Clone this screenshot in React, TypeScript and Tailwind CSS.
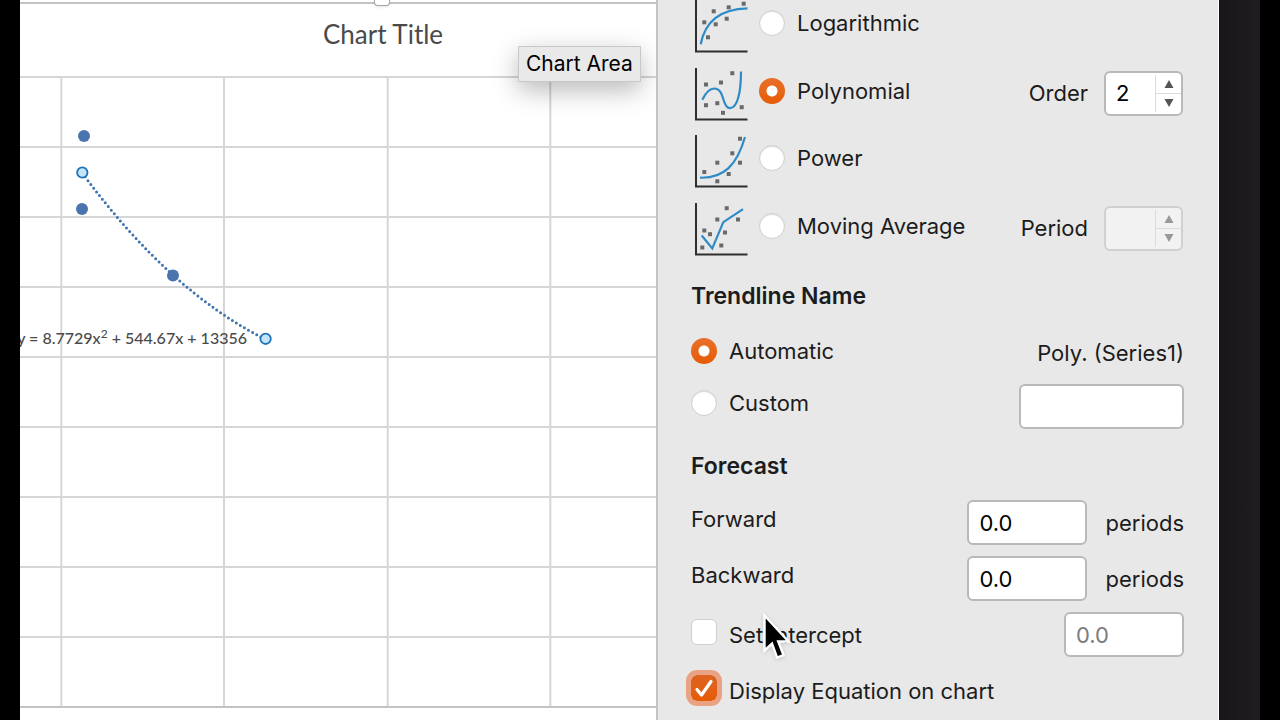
import { useState } from "react";

type Point = [number, number];

const fitIcons: Record<string, { curve: string; dots: Point[] }> = {
  Logarithmic: {
    curve: "M5.7 44.3C10 21 25 9 52.5 8.3",
    dots: [[18.7, 11.3], [33.7, 7.3], [48.7, 3.7], [9.3, 22.3], [20.7, 24.3], [31.7, 18.7], [13, 37.3]],
  },
  Polynomial: {
    curve: "M7.3 31.8C10 26 14 20.5 19.3 20.5C25 20.5 26.8 26 28.3 31C29.8 36.5 31.5 40.2 35 40.2C43 40.2 46 22 46 3.5",
    dots: [[37.3, 5.2], [11, 16.5], [26, 14.5], [11, 37.2], [22.3, 35.2], [28, 44.8], [46.7, 39.2]],
  },
  Power: {
    curve: "M5 42.7C29 43.5 42 30 50 2",
    dots: [[45, 3.7], [37.3, 18.3], [45, 27.7], [22.3, 27.7], [9.3, 37], [33.7, 39], [22.3, 46.3]],
  },
  "Moving Average": {
    curve: "M6.7 32.5L17.3 45.5L28.3 19.2L48 6.2",
    dots: [[31.7, 5.2], [22.3, 16.5], [43, 16.5], [9.3, 27.5], [15, 31.2], [30, 29.5], [7.3, 44.5], [26.3, 42.5]],
  },
};

const inputBox =
  "h-[45px] rounded-md border-2 border-[#b9b9b9] bg-white px-2.5 text-black outline-none placeholder:text-[#7b7b7b]";

function FitIcon({ name }: { name: string }) {
  const { curve, dots } = fitIcons[name];
  return (
    <svg width="54" height="53" viewBox="0 0 54 53" fill="none" className="shrink-0" aria-hidden="true">
      {dots.map(([x, y]) => (
        <rect key={`${x}-${y}`} x={x - 2} y={y - 2} width="4" height="4" fill="#6a6a6a" />
      ))}
      <path d={curve} stroke="#2f8bc6" strokeWidth="2.2" />
      <path d="M1 0V51.4H52.5" stroke="#2e2e2e" strokeWidth="2" />
    </svg>
  );
}

interface RadioProps {
  group: string;
  label: string;
  checked: boolean;
  onSelect: () => void;
}

function Radio({ group, label, checked, onSelect }: RadioProps) {
  return (
    <label className="flex h-[46px] items-center gap-3 whitespace-nowrap">
      <input
        type="radio"
        name={group}
        checked={checked}
        onChange={onSelect}
        className="size-[26px] shrink-0 appearance-none rounded-full border border-[#cfcfcf] bg-white shadow-[inset_0_1px_1px_#00000022] checked:border-0 checked:bg-[radial-gradient(circle,#fff_5px,transparent_6px),linear-gradient(#e8702a,#e65c05)] checked:shadow-none"
      />
      {label}
    </label>
  );
}

interface CheckProps {
  label: string;
  checked: boolean;
  focused?: boolean;
  onToggle: () => void;
}

function Check({ label, checked, focused, onToggle }: CheckProps) {
  return (
    <label className="flex items-start gap-3 whitespace-nowrap leading-[54px]">
      <span className="relative mt-[11px] size-[26px] shrink-0">
        <input
          type="checkbox"
          checked={checked}
          onChange={onToggle}
          className={`block size-full appearance-none rounded-md border border-[#cfcfcf] bg-white checked:border-0 checked:bg-linear-to-b checked:from-[#dc6420] checked:to-[#e65c05] ${
            focused ? "outline-5 outline-[#e9a283]" : ""
          }`}
        />
        {checked && (
          <svg viewBox="0 0 26 26" className="pointer-events-none absolute inset-0" fill="none" aria-hidden="true">
            <path d="M6 14.5L10.5 20L20 6.5" stroke="#fff" strokeWidth="3.2" strokeLinecap="round" strokeLinejoin="round" />
          </svg>
        )}
      </span>
      {label}
    </label>
  );
}

interface StepperProps {
  label: string;
  value: string;
  disabled?: boolean;
  onChange: (value: string) => void;
}

function Stepper({ label, value, disabled, onChange }: StepperProps) {
  const step = (by: number) => onChange(String(Math.max(2, Number(value) + by)));
  const button = "flex flex-1 items-center justify-center";
  return (
    <div className="mt-[3px] mr-px flex h-[45px] items-center gap-4">
      <label htmlFor={label} className="leading-10">{label}</label>
      <div
        className={`flex h-full w-[79px] rounded-md border-2 py-0.5 ${
          disabled ? "border-[#d0d0d0] bg-[#f2f2f2] text-[#999]" : "border-[#b9b9b9] bg-white text-[#555]"
        }`}
      >
        <input
          id={label}
          type="text"
          value={value}
          disabled={disabled}
          onChange={(e) => onChange(e.target.value)}
          className="w-0 flex-1 bg-transparent pl-2.5 text-black outline-none"
        />
        <div className="flex w-[26px] flex-col divide-y divide-[#dcdcdc] border-l border-[#dcdcdc]">
          <button type="button" disabled={disabled} aria-label={`Increase ${label}`} className={button} onClick={() => step(1)}>
            <svg width="10" height="8" viewBox="0 0 10 8" fill="currentColor"><path d="M5 0L9.5 8H.5Z" /></svg>
          </button>
          <button type="button" disabled={disabled} aria-label={`Decrease ${label}`} className={button} onClick={() => step(-1)}>
            <svg width="10" height="8" viewBox="0 0 10 8" fill="currentColor"><path d="M5 8L9.5 0H.5Z" /></svg>
          </button>
        </div>
      </div>
    </div>
  );
}

function ForecastRow({ label }: { label: string }) {
  return (
    <div className="flex h-14 items-start justify-between">
      <label htmlFor={label} className="leading-[46px]">{label}</label>
      <div className="mt-1 flex items-center gap-[18px]">
        <input id={label} type="text" defaultValue="0.0" className={`${inputBox} w-[120px]`} />
        <span>periods</span>
      </div>
    </div>
  );
}

function Chart() {
  const columns = [41.3, 204, 367.7, 530.3];
  const rows = [1, 71, 141, 211, 281, 351, 421, 491, 561];
  const points: Point[] = [[64, 60], [62, 133], [153, 199.5]];
  const ends: Point[] = [[62.3, 96.5], [245.6, 262.8]];
  return (
    <section className="relative min-w-0 flex-1 overflow-hidden bg-white pt-0.5 font-[Lato,sans-serif] text-[#4a4a4a]">
      <div className="absolute top-0 left-[354px] z-10 h-1.5 w-4 rounded-b-sm border border-t-0 border-[#a8a8a8] bg-white shadow" />
      <header className="flex h-[74px] justify-center border-t-2 border-[#c3c3c3] pt-3 pl-[90px]">
        <h1 className="text-[26px] leading-9">Chart Title</h1>
      </header>
      <svg width="100%" height="644" className="block" fill="none">
        <g stroke="#d6d6d6" strokeWidth="2">
          {rows.map((y) => <line key={y} x1="0" x2="100%" y1={y} y2={y} />)}
          {columns.map((x) => <line key={x} x1={x} x2={x} y1="0" y2="631" />)}
        </g>
        <line x1="0" x2="100%" y1="631" y2="631" stroke="#c3c3c3" strokeWidth="2" />
        <path
          d="M62.3 97Q149 215 245 263"
          stroke="#3f74ae"
          strokeWidth="3"
          strokeLinecap="round"
          strokeDasharray="0 4.7"
        />
        {points.map(([x, y]) => <circle key={y} cx={x} cy={y} r="6" fill="#4a74ae" />)}
        {ends.map(([x, y]) => (
          <circle key={y} cx={x} cy={y} r="5.2" fill="#c5e5fa" stroke="#1f72b5" strokeWidth="1.8" />
        ))}
      </svg>
      <div className="absolute top-[326px] left-0 flex w-[227px] justify-end overflow-hidden text-base leading-6 font-medium whitespace-nowrap">
        <span>
          y = 8.7729x<sup className="text-xs">2</sup> + 544.67x + 13356
        </span>
      </div>
      <div
        role="tooltip"
        className="absolute top-[46px] left-[498px] border border-[#c8c8c8] bg-[#e9e9e9] px-[7px] font-[Inter,sans-serif] text-[21px] leading-[34px] whitespace-nowrap text-black shadow-[0_8px_26px_#00000048]"
      >
        Chart Area
      </div>
    </section>
  );
}

export default function App() {
  const [fit, setFit] = useState("Polynomial");
  const [naming, setNaming] = useState("Automatic");
  const [order, setOrder] = useState("2");
  const [intercept, setIntercept] = useState(false);
  const [equation, setEquation] = useState(true);

  return (
    <main className="flex min-h-screen overflow-hidden bg-black px-5">
      <Chart />
      <form className="w-[563px] shrink-0 border-r border-l-2 border-r-white border-l-[#c4c4c4] bg-[#e8e8e8] pr-[34px] pl-[33px] font-[Inter,sans-serif] text-[22px] leading-7 text-[#1c1c1c]">
        <div className="grid h-[270px] grid-rows-4">
          {Object.keys(fitIcons).map((name) => (
            <div key={name} className="flex items-start">
              <div className="flex flex-1 items-start gap-2.5 pl-1">
                <FitIcon name={name} />
                <Radio group="fit" label={name} checked={fit === name} onSelect={() => setFit(name)} />
              </div>
              {name === "Polynomial" && <Stepper label="Order" value={order} onChange={setOrder} />}
              {name === "Moving Average" && <Stepper label="Period" value="" disabled onChange={() => {}} />}
            </div>
          ))}
        </div>

        <h2 className="mb-1.5 text-[23px] leading-[52px] font-semibold">Trendline Name</h2>
        <div className="flex h-[52px] items-start justify-between">
          <Radio group="naming" label="Automatic" checked={naming === "Automatic"} onSelect={() => setNaming("Automatic")} />
          <span className="leading-[50px]">Poly. (Series1)</span>
        </div>
        <div className="flex h-[52px] items-start justify-between">
          <Radio group="naming" label="Custom" checked={naming === "Custom"} onSelect={() => setNaming("Custom")} />
          <input type="text" aria-label="Custom name" className={`${inputBox} mt-1 w-[165px]`} />
        </div>

        <h2 className="mt-2 mb-1 text-[23px] leading-[52px] font-semibold">Forecast</h2>
        <ForecastRow label="Forward" />
        <ForecastRow label="Backward" />
        <div className="relative flex h-14 items-start justify-between">
          <Check label="Set Intercept" checked={intercept} onToggle={() => setIntercept(!intercept)} />
          <input type="text" aria-label="Intercept" placeholder="0.0" className={`${inputBox} mt-1 w-[120px]`} />
          <svg width="32" height="52" viewBox="0 0 32 52" className="pointer-events-none absolute top-1 left-[70px] drop-shadow-sm" aria-hidden="true">
            <path
              d="M3.5 3.5V38.5L11 31.5L16 45.5L22.5 43L17.2 29.5H27.5Z"
              fill="#000"
              stroke="#fff"
              strokeWidth="2.4"
            />
          </svg>
        </div>
        <div className="flex h-14 items-start">
          <Check label="Display Equation on chart" checked={equation} focused onToggle={() => setEquation(!equation)} />
        </div>
      </form>
      <aside className="w-[41px] shrink-0 bg-linear-to-r from-[#181618] to-[#1f1d1f]" />
    </main>
  );
}
